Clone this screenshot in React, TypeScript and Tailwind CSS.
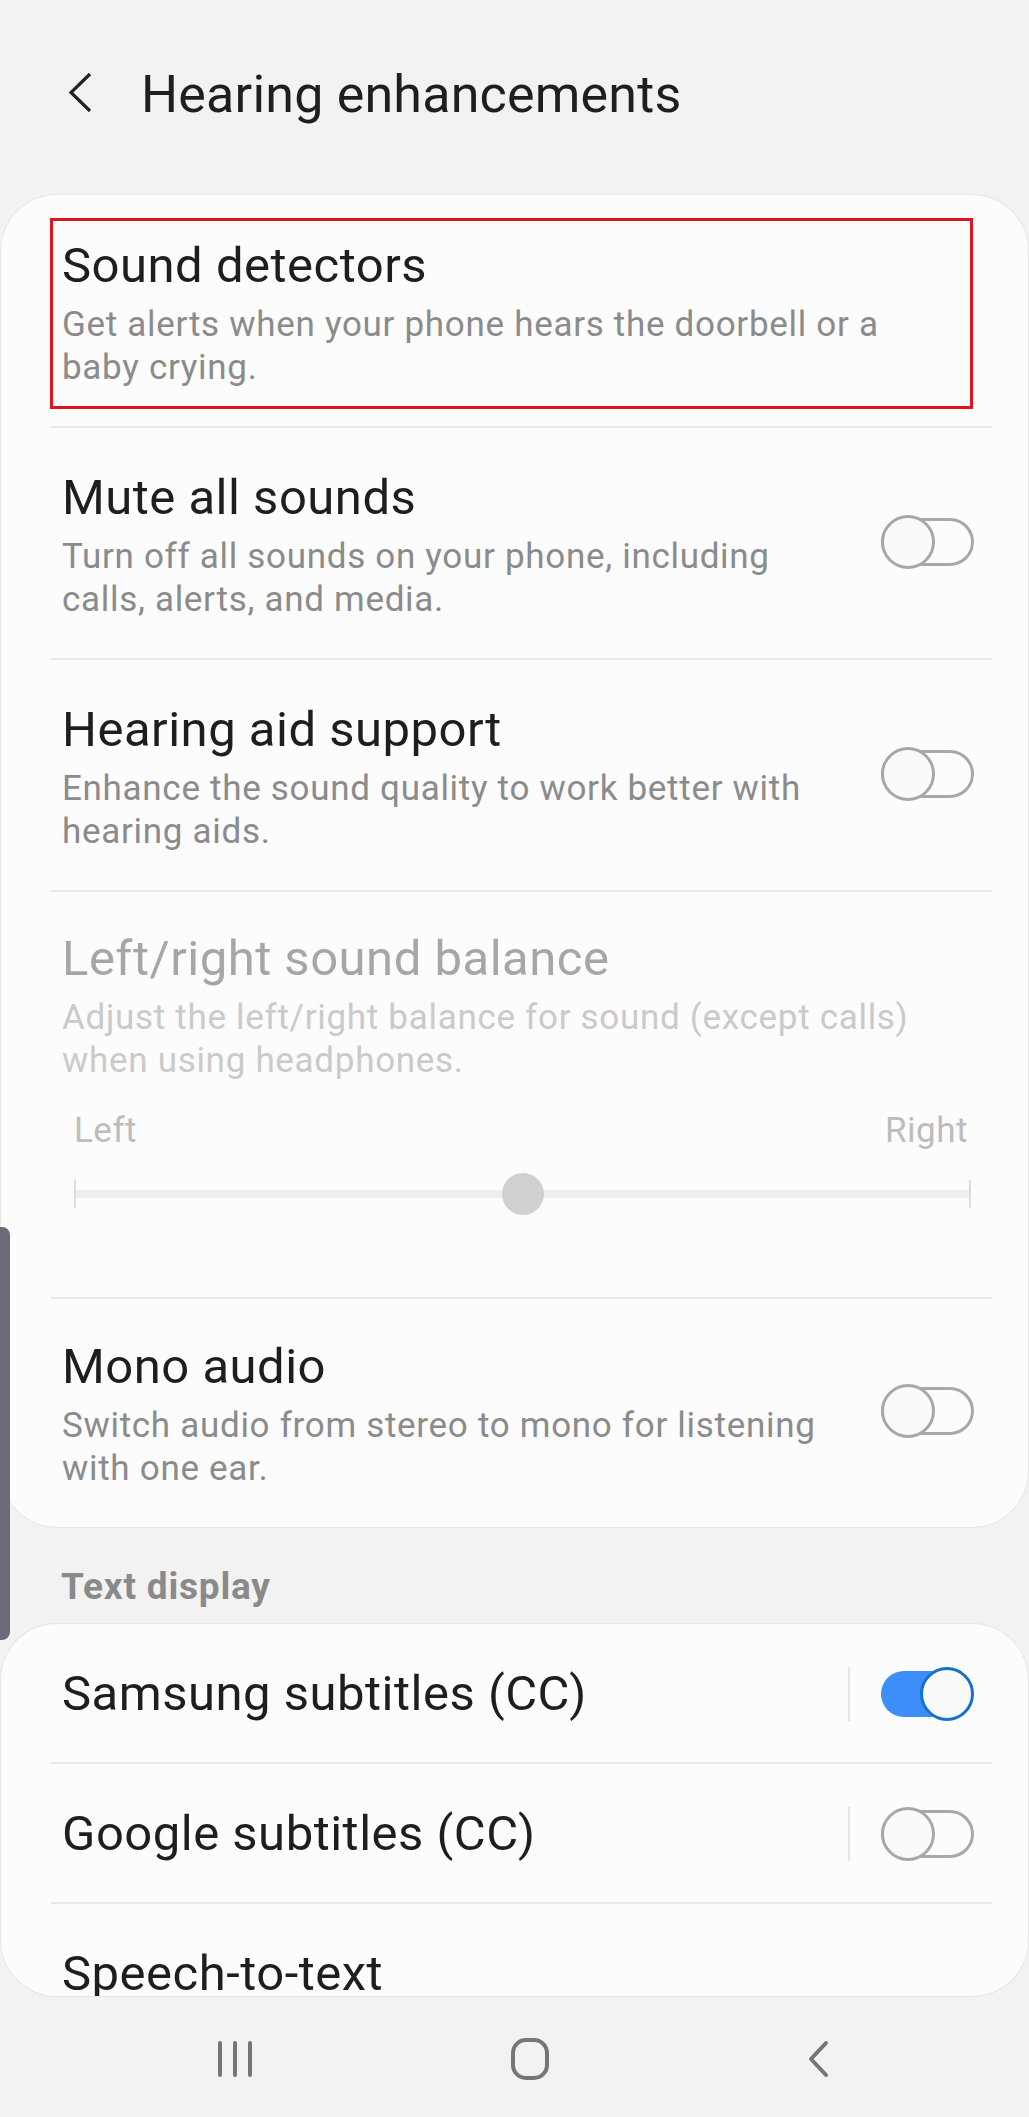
import React from "react";

const Toggle = ({ on }: { on: boolean }) => (
  <div className="relative w-[93px] h-[54px] shrink-0">
    {on ? (
      <>
        <div className="absolute left-0 right-[4px] top-[4px] h-[46px] rounded-full bg-[#3d8ef8]" />
        <div className="absolute right-0 top-0 w-[54px] h-[54px] rounded-full border-[3px] border-[#1670d2] bg-[#fafafa]" />
      </>
    ) : (
      <>
        <div className="absolute left-0 right-0 top-[3px] h-[48px] rounded-full border-[3px] border-[#a8a8a8]" />
        <div className="absolute left-0 top-0 w-[54px] h-[54px] rounded-full border-[3px] border-[#a8a8a8] bg-[#fafafa]" />
      </>
    )}
  </div>
);

const Divider = () => <div className="ml-[50px] mr-[36px] h-[2px] bg-[#e8e8e8]" />;

const Title = ({ children, muted }: { children: React.ReactNode; muted?: boolean }) => (
  <div
    className={`text-[49px] leading-[60px] tracking-[0.5px] whitespace-nowrap ${
      muted ? "text-[#a6a6a6]" : "text-[#1e1e1e]"
    }`}
  >
    {children}
  </div>
);

const Desc = ({ lines, muted }: { lines: string[]; muted?: boolean }) => (
  <div
    className={`mt-[7px] text-[35px] leading-[43px] tracking-[0.7px] ${
      muted ? "text-[#cacaca]" : "text-[#8b8b8b]"
    }`}
  >
    {lines.map((l) => (
      <div key={l} className="whitespace-nowrap">
        {l}
      </div>
    ))}
  </div>
);

const ToggleRow = ({ title, lines, pt, pb }: { title: string; lines: string[]; pt: string; pb: string }) => (
  <div className={`flex items-center justify-between pl-[61px] pr-[54px] ${pt} ${pb}`}>
    <div>
      <Title>{title}</Title>
      <Desc lines={lines} />
    </div>
    <div className="mb-[6px]">
      <Toggle on={false} />
    </div>
  </div>
);

const SwitchRow = ({ title, on }: { title: string; on: boolean }) => (
  <div className="flex items-center justify-between pl-[61px] pr-[54px] pt-[40px] pb-[38px]">
    <Title>{title}</Title>
    <div className="flex items-center">
      <div className="w-[2px] h-[54px] bg-[#e6e6e6] mr-[31px]" />
      <Toggle on={on} />
    </div>
  </div>
);

export default function App() {
  return (
    <div className="relative w-[1029px] h-[2117px] bg-[#f2f2f2] font-[Roboto,sans-serif] overflow-hidden">
      {/* Header */}
      <div className="h-[195px] pt-[64px] flex items-start">
        <svg className="ml-[68px] mt-[8px]" width="24" height="41" viewBox="0 0 24 41">
          <path d="M22 2 L3 20.5 L22 39" fill="none" stroke="#222" strokeWidth="3.2" strokeLinejoin="miter" />
        </svg>
        <div className="ml-[49px] text-[52px] leading-[62px] tracking-[0.2px] text-[#1e1e1e] whitespace-nowrap">
          Hearing enhancements
        </div>
      </div>

      {/* Card 1 */}
      <div className="mx-[1px] rounded-[56px] bg-[#fcfcfc] shadow-[0_0_0_1px_#e6e6e6]">
        <div className="pt-[23px] pb-[17px]">
          <div className="ml-[49px] mr-[55px] border-[3px] border-[#e0141c] pt-[15px] pb-[17px] pl-[9px]">
            <Title>Sound detectors</Title>
            <Desc lines={["Get alerts when your phone hears the doorbell or a", "baby crying."]} />
          </div>
        </div>
        <Divider />
        <ToggleRow
          title="Mute all sounds"
          lines={["Turn off all sounds on your phone, including", "calls, alerts, and media."]}
          pt="pt-[40px]"
          pb="pb-[37px]"
        />
        <Divider />
        <ToggleRow
          title="Hearing aid support"
          lines={["Enhance the sound quality to work better with", "hearing aids."]}
          pt="pt-[40px]"
          pb="pb-[37px]"
        />
        <Divider />
        <div className="pl-[61px] pr-[54px] pt-[37px] pb-[81px]">
          <Title muted>Left/right sound balance</Title>
          <Desc muted lines={["Adjust the left/right balance for sound (except calls)", "when using headphones."]} />
          <div className="mt-[27px] flex justify-between pl-[12px] pr-[6px] text-[35px] leading-[43px] tracking-[0.5px] text-[#bdbdbd]">
            <span>Left</span>
            <span>Right</span>
          </div>
          <div className="relative mt-[20px] h-[44px] ml-[12px] mr-[3px] flex items-center">
            <div className="w-[2px] h-[28px] bg-[#dcdcdc]" />
            <div className="flex-1 h-[8px] bg-[#eeeeee]" />
            <div className="w-[2px] h-[28px] bg-[#dcdcdc]" />
            <div className="absolute left-1/2 top-[1px] -translate-x-1/2 w-[42px] h-[42px] rounded-full bg-[#d0d0d0]" />
          </div>
        </div>
        <Divider />
        <ToggleRow
          title="Mono audio"
          lines={["Switch audio from stereo to mono for listening", "with one ear."]}
          pt="pt-[38px]"
          pb="pb-[37px]"
        />
      </div>

      {/* Section header */}
      <div className="mt-[38px] pl-[61px] text-[37px] leading-[44px] tracking-[0.8px] font-bold text-[#8a8a8a]">
        Text display
      </div>

      {/* Card 2 */}
      <div className="mt-[15px] mx-[1px] h-[372px] overflow-hidden rounded-[56px] bg-[#fcfcfc] shadow-[0_0_0_1px_#e6e6e6]">
        <SwitchRow title="Samsung subtitles (CC)" on={true} />
        <Divider />
        <SwitchRow title="Google subtitles (CC)" on={false} />
        <Divider />
        <div className="pl-[61px] pt-[40px]">
          <Title>Speech-to-text</Title>
        </div>
      </div>

      {/* Nav bar */}
      <div className="h-[122px] flex items-center justify-between pl-[216px] pr-[199px] pt-[4px]">
        <svg width="38" height="38" viewBox="0 0 38 38">
          <g stroke="#767676" strokeWidth="4" strokeLinecap="round">
            <line x1="4" y1="3" x2="4" y2="35" />
            <line x1="19" y1="3" x2="19" y2="35" />
            <line x1="34" y1="3" x2="34" y2="35" />
          </g>
        </svg>
        <svg width="38" height="42" viewBox="0 0 38 42">
          <rect x="2" y="2" width="34" height="38" rx="13" fill="none" stroke="#767676" strokeWidth="4" />
        </svg>
        <svg width="24" height="38" viewBox="0 0 24 38">
          <path d="M20 3 L5 19 L20 35" fill="none" stroke="#767676" strokeWidth="4" strokeLinecap="round" strokeLinejoin="round" />
        </svg>
      </div>

      {/* Edge panel handle */}
      <div className="absolute left-0 top-[1227px] w-[10px] h-[413px] rounded-r-[8px] bg-[#6b6a78]" />
    </div>
  );
}
